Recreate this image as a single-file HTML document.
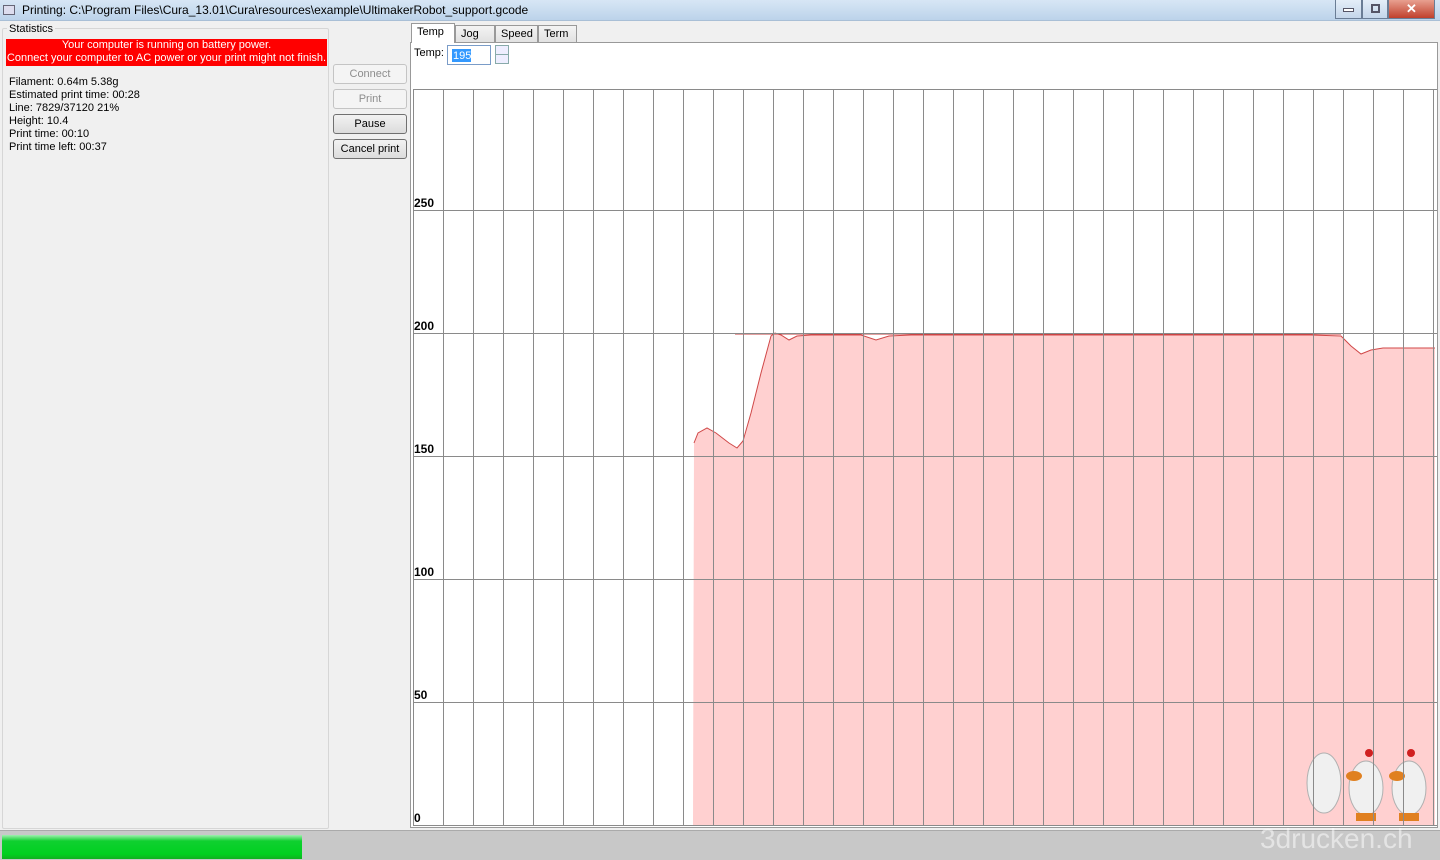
<!DOCTYPE html>
<html><head><meta charset="utf-8"><style>
*{margin:0;padding:0;box-sizing:border-box}
body{width:1440px;height:860px;overflow:hidden;background:#f0f0f0;font-family:"Liberation Sans",sans-serif;font-size:11px;color:#000;position:relative}
.title{position:absolute;left:0;top:0;width:1440px;height:21px;background:linear-gradient(#d7e6f5,#bcd3ea);border-bottom:1px solid #a9bfd6}
.title span{position:absolute;left:22px;top:3px;font-size:12px}
.ico{position:absolute;left:3px;top:5px;width:12px;height:10px;background:#dde;border:1px solid #667}
.wb{position:absolute;top:0;height:19px;border:1px solid #6a7d95;border-top:none}
.stat{position:absolute;left:2px;top:28px;width:327px;height:801px;border:1px solid #d6d6d6;border-radius:2px}
.stat .lg{position:absolute;left:4px;top:-6px;background:#f0f0f0;padding:0 2px}
.warn{position:absolute;left:3px;top:10px;width:321px;height:27px;background:#f00;color:#fff;text-align:center;line-height:13px;font-size:11px}
.info{position:absolute;left:6px;top:47px;line-height:13px}
.btn{position:absolute;left:333px;width:74px;height:20px;border:1px solid #707070;border-radius:3px;background:linear-gradient(#f2f2f2,#dcdcdc);text-align:center;line-height:18px}
.dis{color:#8d8d8d;border-color:#c4c4c4;background:#f4f4f4}
.tab{position:absolute;top:25px;height:18px;border:1px solid #999;border-bottom:none;background:linear-gradient(#f4f4f4,#e0e0e0);padding-left:5px;line-height:16px}
.pane{position:absolute;left:410px;top:42px;width:1028px;height:786px;border:1px solid #999;background:#fff}
.prog{position:absolute;left:0;top:830px;width:1440px;height:30px;background:#c8c8c8;border-top:1px solid #aaa}
.prog div{position:absolute;left:2px;top:4px;width:300px;height:24px;background:linear-gradient(#a0f0b0 0,#10d030 25%,#00d020 80%,#10b020);}
</style></head><body>
<div class="title"><div class="ico"></div><span>Printing: C:\Program Files\Cura_13.01\Cura\resources\example\UltimakerRobot_support.gcode</span>
<div class="wb" style="left:1335px;width:27px;background:linear-gradient(#e4eef8,#c4d6ea)"><div style="margin:8px 7px;height:4px;border:1px solid #556;background:#fff"></div></div>
<div class="wb" style="left:1362px;width:26px;background:linear-gradient(#e4eef8,#c4d6ea)"><div style="margin:4px 8px;width:9px;height:9px;border:2px solid #556"></div></div>
<div class="wb" style="left:1388px;width:47px;background:linear-gradient(#e8a090,#c0402c);color:#fff;text-align:center;font-weight:bold;font-size:13px;line-height:17px">✕</div>
</div>
<div class="stat"><span class="lg">Statistics</span>
<div class="warn">Your computer is running on battery power.<br>Connect your computer to AC power or your print might not finish.</div>
<div class="info">Filament: 0.64m 5.38g<br>Estimated print time: 00:28<br>Line: 7829/37120 21%<br>Height: 10.4<br>Print time: 00:10<br>Print time left: 00:37</div></div>
<div class="btn dis" style="top:64px">Connect</div>
<div class="btn dis" style="top:89px">Print</div>
<div class="btn" style="top:114px">Pause</div>
<div class="btn" style="top:139px">Cancel print</div>
<div class="tab" style="left:455px;width:40px">Jog</div>
<div class="tab" style="left:495px;width:43px">Speed</div>
<div class="tab" style="left:538px;width:39px">Term</div>
<div class="pane">
<svg width="1026" height="784" style="position:absolute;left:0;top:0">
<polygon fill="#ffd0d0" points="282,783 283,400 287,390 296,385 305,390 318,400 326,405 332,398 340,370 350,330 360,293 364,290 370,292 378,297 386,293 400,292 430,292 450,292 465,297 478,293 500,292 600,292 700,292 800,292 900,292 930,293 940,303 950,311 960,307 972,305 990,305 1024,305 1024,783"/>
<polyline fill="none" stroke="#d04848" stroke-width="1" points="283,400 287,390 296,385 305,390 318,400 326,405 332,398 340,370 350,330 360,293 364,290 370,292 378,297 386,293 400,292 430,292 450,292 465,297 478,293 500,292 600,292 700,292 800,292 900,292 930,293 940,303 950,311 960,307 972,305 990,305 1024,305"/>
<line x1="324" y1="291" x2="930" y2="291" stroke="#c84040"/>
<g stroke="#8a8a8a" stroke-width="1">
<line x1="2" y1="46.5" x2="1026" y2="46.5"/><line x1="2" y1="167.5" x2="1026" y2="167.5"/><line x1="2" y1="290.5" x2="1026" y2="290.5"/><line x1="2" y1="413.5" x2="1026" y2="413.5"/><line x1="2" y1="536.5" x2="1026" y2="536.5"/><line x1="2" y1="659.5" x2="1026" y2="659.5"/><line x1="2" y1="782.5" x2="1026" y2="782.5"/>
<line x1="2.5" y1="46" x2="2.5" y2="783"/>
</g>
<g id="v" stroke="#8a8a8a"></g>
<g font-family="Liberation Sans" font-weight="bold" font-size="12">
<text x="3" y="164">250</text><text x="3" y="287">200</text><text x="3" y="410">150</text><text x="3" y="533">100</text><text x="3" y="656">50</text><text x="3" y="779">0</text></g>
<text x="3" y="13" font-family="Liberation Sans" font-size="11">Temp:</text>
<rect x="36.5" y="2.5" width="43" height="19" fill="#fff" stroke="#7a9cc8"/>
<rect x="41" y="6" width="19" height="13" fill="#3399ff"/><text x="42" y="16" fill="#fff" font-family="Liberation Sans" font-size="11">195</text>
<rect x="84.5" y="2.5" width="13" height="9" fill="#eef" stroke="#8aa"/><rect x="84.5" y="11.5" width="13" height="9" fill="#eef" stroke="#8aa"/>
<g fill="#f0f0f0" stroke="#b0b0b0"><ellipse cx="913" cy="740" rx="17" ry="30"/><ellipse cx="955" cy="745" rx="17" ry="27"/><ellipse cx="998" cy="745" rx="17" ry="27"/></g>
<g fill="#e08020"><ellipse cx="943" cy="733" rx="8" ry="5"/><ellipse cx="986" cy="733" rx="8" ry="5"/><rect x="945" y="770" width="20" height="8"/><rect x="988" y="770" width="20" height="8"/></g>
<g fill="#d02020"><circle cx="958" cy="710" r="4"/><circle cx="1000" cy="710" r="4"/></g>
</svg>
<svg width="1026" height="784" style="position:absolute;left:0;top:0" stroke="#8a8a8a">
<path d="M32.5 46V783M62.5 46V783M92.5 46V783M122.5 46V783M152.5 46V783M182.5 46V783M212.5 46V783M242.5 46V783M272.5 46V783M302.5 46V783M332.5 46V783M362.5 46V783M392.5 46V783M422.5 46V783M452.5 46V783M482.5 46V783M512.5 46V783M542.5 46V783M572.5 46V783M602.5 46V783M632.5 46V783M662.5 46V783M692.5 46V783M722.5 46V783M752.5 46V783M782.5 46V783M812.5 46V783M842.5 46V783M872.5 46V783M902.5 46V783M932.5 46V783M962.5 46V783M992.5 46V783M1022.5 46V783"/>
</svg>
</div>
<div class="tab" style="left:411px;top:23px;height:20px;width:44px;background:#fff;z-index:2">Temp</div>
<div class="prog"><div></div><span style="position:absolute;left:1260px;top:-8px;font-size:28px;color:rgba(255,255,255,0.5)">3drucken.ch</span></div>
</body></html>
